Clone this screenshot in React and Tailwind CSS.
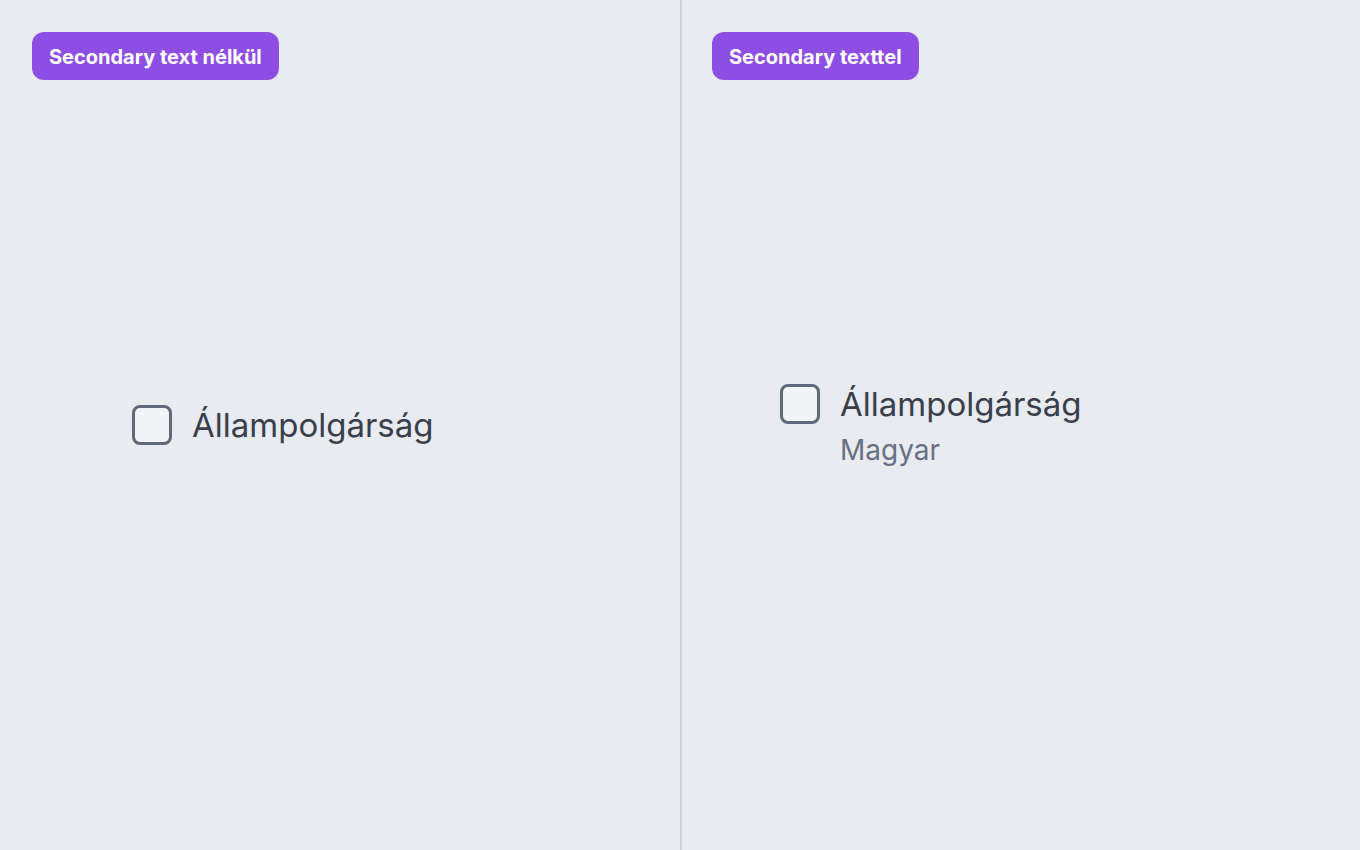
import React from 'react';

const Badge = ({ children }) => (
  <div className="inline-flex h-12 items-center rounded-xl bg-[#8e4ee3] px-[17px] pt-[2px] text-[20px] font-bold text-white">
    {children}
  </div>
);

const Checkbox = () => (
  <div className="h-10 w-10 shrink-0 rounded-lg border-[3px] border-[#606979] bg-[#f3f4f7]" />
);

export default function App() {
  return (
    <div
      className="flex h-[850px] w-[1360px] bg-[#e8ebf0] text-[#383e4b]"
      style={{ fontFamily: 'Inter, "Noto Sans", sans-serif' }}
    >
      {/* Without secondary text */}
      <div className="flex w-[682px] flex-col border-r-2 border-[#cdd1d8] p-8">
        <div>
          <Badge>Secondary text nélkül</Badge>
        </div>
        <div className="flex flex-1 items-center pb-[48px] pl-[100px]">
          <div className="flex items-center gap-5">
            <Checkbox />
            <span className="text-[33px] leading-10">Állampolgárság</span>
          </div>
        </div>
      </div>

      {/* With secondary text */}
      <div className="flex w-[678px] flex-col py-8 pr-8 pl-[30px]">
        <div>
          <Badge>Secondary texttel</Badge>
        </div>
        <div className="flex flex-1 items-center pb-[44px] pl-[68px]">
          <div className="flex items-start gap-5">
            <Checkbox />
            <div className="flex flex-col">
              <span className="text-[33px] leading-10">Állampolgárság</span>
              <span className="mt-[6px] text-[28px] leading-[40px] text-[#687183]">Magyar</span>
            </div>
          </div>
        </div>
      </div>
    </div>
  );
}
